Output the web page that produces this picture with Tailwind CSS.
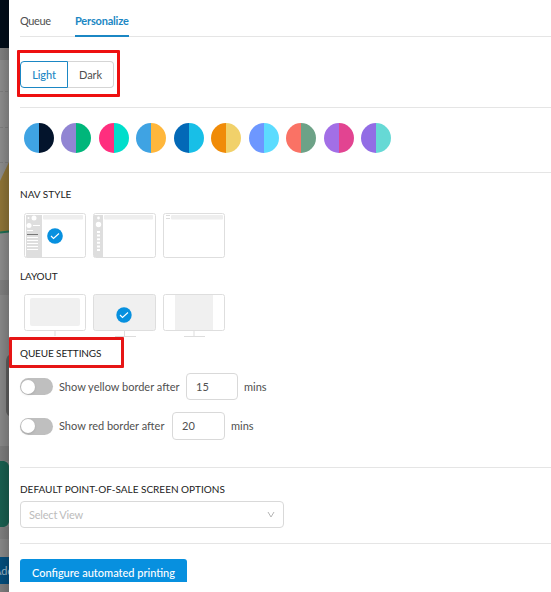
<!DOCTYPE html>
<html lang="en">
<head>
<meta charset="utf-8">
<title>Personalize</title>
<script src="https://cdn.jsdelivr.net/npm/@tailwindcss/browser@4"></script>
</head>
<body class="bg-white">
<div class="relative flex h-[592px] w-[551px] overflow-hidden bg-white font-['Lato',sans-serif] text-[11px] leading-[14px] text-[#505050]">
  <!-- dimmed page behind the drawer -->
  <aside class="relative w-[9px] shrink-0 overflow-hidden bg-[#858585]">
    <svg width="9" height="592" viewBox="0 0 9 592">
      <defs><linearGradient id="shade"><stop offset="0" stop-color="#000" stop-opacity="0"/><stop offset="1" stop-color="#000" stop-opacity=".14"/></linearGradient></defs>
      <rect width="9" height="48" fill="#010c18"/>
      <rect y="48" width="9" height="12" fill="#7c7c7c"/>
      <rect y="60" width="9" height="222" fill="#898989"/>
      <path d="M0 91.500H9M0 127.500H9M0 162.500H9" stroke="#7b7b7b" stroke-dasharray="3 2"/>
      <path d="M0 181L9 162V232H0Z" fill="#8b7135"/>
      <path d="M0 232.500L9 231.500" stroke="#1c6b52" stroke-width="2"/>
      <rect y="280" width="9" height="15" fill="#7c7c7c"/>
      <path d="M9 355Q6 357 6 362V410Q6 414 9 416Z" fill="#5c5c5c"/>
      <rect y="446" width="9" height="15" fill="#797979"/>
      <path d="M0 461H4Q8 462 9 466V522Q8 526 4 527H0Z" fill="#185d4e"/>
      <rect y="527" width="9" height="12" fill="#7c7c7c"/>
      <rect y="557" width="9" height="27" fill="#034c7a"/>
      <rect y="584" width="9" height="8" fill="#7c7c7c"/>
      <rect width="9" height="592" fill="url(#shade)"/>
    </svg>
    <span class="absolute top-[564px] left-[-6px] text-[#8ba5b5]">Add</span>
  </aside>

  <main class="flex min-w-0 flex-1 flex-col pl-[11px]">
    <nav class="flex h-[37px] shrink-0 gap-[25px] border-b border-[#e5e5e5]">
      <span class="h-[37px] w-[30px] pt-[14px] tracking-[-0.4px] whitespace-nowrap">Queue</span>
      <span class="h-[37px] w-[54px] border-b-2 border-[#1b87c4] pt-[14px] font-bold tracking-[-0.2px] whitespace-nowrap text-[#1b87c4]">Personalize</span>
    </nav>

    <section class="flex h-[71px] shrink-0 border-b border-[#e5e5e5] pt-6">
      <button class="h-[27px] w-12 rounded-l-[4px] border border-[#1b87c4] font-medium tracking-[-0.1px] text-[#1b87c4]">Light</button>
      <button class="h-[27px] w-[46px] rounded-r-[4px] border border-l-0 border-[#d5d5d5] tracking-[-0.1px]">Dark</button>
    </section>

    <section class="flex h-[65px] shrink-0 gap-[7.45px] border-b border-[#e5e5e5] pt-[15px] pl-1">
      <i class="size-[30px] rounded-full bg-linear-to-r from-[#3fa3e3] from-50% to-[#03142c] to-50%"></i>
      <i class="size-[30px] rounded-full bg-linear-to-r from-[#9185d3] from-50% to-[#00b67a] to-50%"></i>
      <i class="size-[30px] rounded-full bg-linear-to-r from-[#ff2e7e] from-50% to-[#00decb] to-50%"></i>
      <i class="size-[30px] rounded-full bg-linear-to-r from-[#3fa3e3] from-50% to-[#ffb73c] to-50%"></i>
      <i class="size-[30px] rounded-full bg-linear-to-r from-[#0369b7] from-50% to-[#18bfe7] to-50%"></i>
      <i class="size-[30px] rounded-full bg-linear-to-r from-[#f08b08] from-50% to-[#f1d16a] to-50%"></i>
      <i class="size-[30px] rounded-full bg-linear-to-r from-[#6d97ff] from-50% to-[#5cdcff] to-50%"></i>
      <i class="size-[30px] rounded-full bg-linear-to-r from-[#fa7265] from-50% to-[#6da287] to-50%"></i>
      <i class="size-[30px] rounded-full bg-linear-to-r from-[#a26fe6] from-50% to-[#e24491] to-50%"></i>
      <i class="size-[30px] rounded-full bg-linear-to-r from-[#926de5] from-50% to-[#66d9d5] to-50%"></i>
    </section>

    <section class="h-[82px] shrink-0 pt-[14px]">
      <h2 class="mb-3 text-[10px] text-[#222]">NAV STYLE</h2>
      <svg class="ml-1" width="203" height="46" viewBox="0 0 203 46" fill="none">
        <g stroke="#dedede"><rect x=".5" y=".5" width="61" height="44" rx="2"/><rect x="69.500" y=".5" width="62" height="44" rx="2"/><rect x="139.500" y=".5" width="61" height="44" rx="2"/></g>
        <path d="M2 2H18V44H2Z" fill="#dedede"/><rect x="19" y="2" width="40" height="4.500" rx="1" fill="#eee"/><rect x="80" y="2" width="49" height="4.500" rx="1" fill="#eee"/><rect x="147" y="2" width="52" height="4.500" rx="1" fill="#eee"/>
        <circle cx="10" cy="5" r="2.500" fill="#fff"/><circle cx="4.500" cy="5" r="1" fill="#fff"/><circle cx="5" cy="12.500" r="2.500" fill="#fff"/>
        <path d="M9 12.500H16M3 17.500H9M3 24.500H14M3 27.500H14M3 30.500H14M3 33.500H14M3 36.500H14" stroke="#fff"/>
        <path d="M3 21.500H14" stroke="#777"/>
        <circle cx="31" cy="23" r="7.800" fill="#0790df"/><path d="M27 23L29.500 25.500L35 20.500" stroke="#fff" stroke-width="1.100"/>
        <path d="M70 2H79V44H70Z" fill="#dedede"/>
        <circle cx="74.500" cy="5" r="1.400" fill="#fff"/><circle cx="74.500" cy="11.500" r="2.700" fill="#fff"/>
        <path d="M74.500 18V39" stroke="#fff" stroke-width="3" stroke-dasharray="2 1.600"/>
        <path d="M142 2.500H146M142 5.500H146" stroke="#ddd"/>
      </svg>
    </section>

    <section class="h-[91px] shrink-0 pt-[14px]">
      <h2 class="mb-[11px] text-[10px] tracking-[-0.15px] text-[#222]">LAYOUT</h2>
      <svg class="ml-1" width="203" height="43" viewBox="0 0 203 43" fill="none">
        <rect x="69.500" y=".5" width="62" height="36" rx="2" fill="#f0f0f0"/>
        <rect x="6" y="4" width="50" height="28" rx="2" fill="#f0f0f0"/><path d="M151 1H189V36H151Z" fill="#f0f0f0"/>
        <g stroke="#dedede"><rect x=".5" y=".5" width="61" height="36" rx="2"/><rect x="69.500" y=".5" width="62" height="36" rx="2"/><rect x="139.500" y=".5" width="61" height="36" rx="2"/></g>
        <path d="M31 37V42M170 37V42" stroke="#eee" stroke-width="2"/><path d="M100.500 37V42M91 42.500H112M160 42.500H181" stroke="#ddd"/>
        <circle cx="100" cy="21" r="7.700" fill="#0790df"/><path d="M96 21L98.500 23.500L104 18.500" stroke="#fff" stroke-width="1.100"/>
      </svg>
    </section>

    <section class="h-[122px] shrink-0 border-b border-[#e5e5e5]">
      <h2 class="text-[10px] tracking-[-0.12px] text-[#222]">QUEUE SETTINGS</h2>
      <div class="mt-[13px] flex h-[27px] items-center">
        <span class="flex h-[17px] w-[33px] items-center rounded-full bg-[#bfbfbf] pl-px"><i class="size-[14px] rounded-full bg-white shadow-sm"></i></span>
        <span class="ml-[6px] w-[121px] whitespace-nowrap">Show yellow border after</span>
        <span class="ml-[6px] flex h-[27px] w-[52px] items-center rounded-[4px] border border-[#d9d9d9] pl-[9px]">15</span>
        <span class="ml-[6px]">mins</span>
      </div>
      <div class="mt-3 flex h-7 items-center">
        <span class="flex h-[17px] w-[33px] items-center rounded-full bg-[#bfbfbf] pl-px"><i class="size-[14px] rounded-full bg-white shadow-sm"></i></span>
        <span class="ml-[6px] w-[107px] whitespace-nowrap">Show red border after</span>
        <span class="ml-[6px] flex h-7 w-[53px] items-center rounded-[4px] border border-[#d9d9d9] pl-[9px]">20</span>
        <span class="ml-[6px]">mins</span>
      </div>
    </section>

    <section class="h-[76px] shrink-0 border-b border-[#e5e5e5] pt-[14px]">
      <h2 class="mb-[5px] text-[10px] whitespace-nowrap text-[#222]">DEFAULT POINT-OF-SALE SCREEN OPTIONS</h2>
      <div class="flex h-[27px] w-[264px] items-center justify-between rounded-[4px] border border-[#d9d9d9] pr-2 pl-2 text-[#bcbcbc]">
        <span class="tracking-[-0.2px]">Select View</span>
        <svg width="8" height="7" viewBox="0 0 8 7" fill="none" stroke="#b5b5b5"><path d="M1 1L4 6L7 1"/></svg>
      </div>
    </section>

    <section class="pt-[15px]">
      <button class="block h-[23px] w-[167px] rounded-t-[3px] bg-[#0790df] pt-[4px] font-medium whitespace-nowrap text-white">Configure automated printing</button>
    </section>
  </main>

  <!-- highlight frames -->
  <div class="pointer-events-none absolute top-[50px] left-[17px] h-[47px] w-[103px] rounded-[1px] border-[3px] border-[#ee1010]"></div>
  <div class="pointer-events-none absolute top-[337px] left-[9px] h-[31px] w-[115px] rounded-[1px] border-[3px] border-[#e61515]"></div>
</div>
</body>
</html>
